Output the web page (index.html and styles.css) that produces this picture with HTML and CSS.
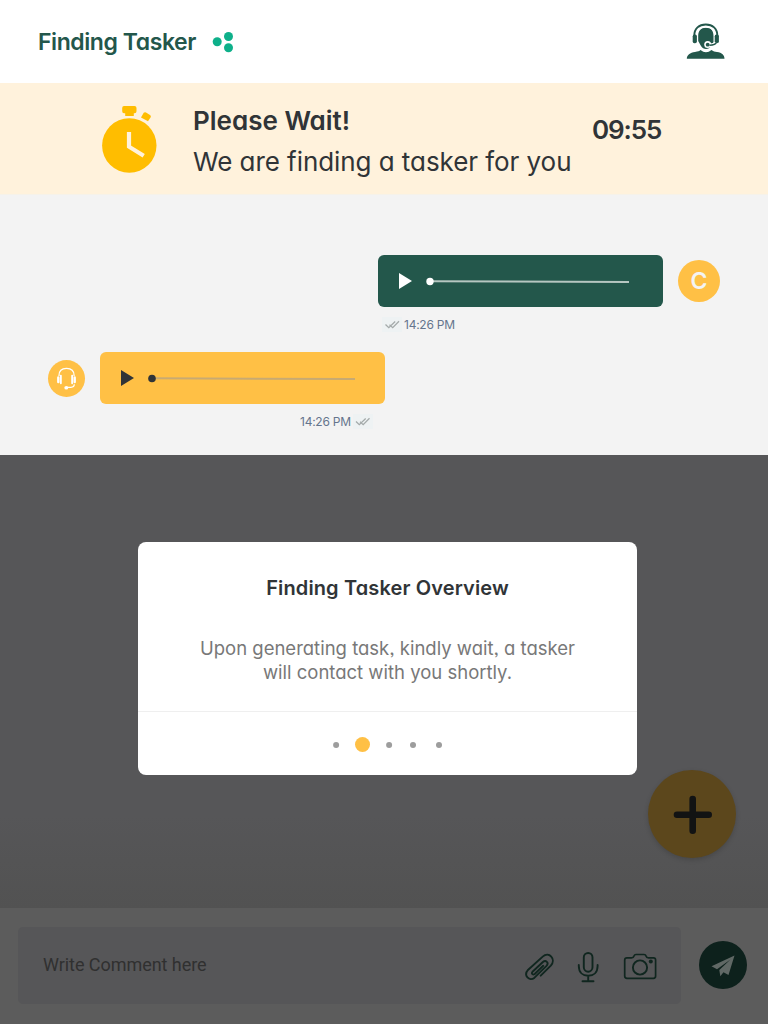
FILE: index.html
```html
<!DOCTYPE html>
<html lang="en">
<head>
<meta charset="utf-8">
<title>Finding Tasker</title>
<link rel="stylesheet" href="styles.css">
</head>
<body>
<div class="app">
  <header class="header">
    <h1 class="header-title">Finding Tasker</h1>
    <svg class="header-dots" width="22" height="22" viewBox="0 0 22 22" fill="#0eb08a"><circle cx="5.2" cy="10.800" r="4.500"/><circle cx="16.500" cy="5.500" r="4.500"/><circle cx="16.500" cy="16.800" r="4.500"/></svg>
    <svg class="header-agent" width="40" height="38" viewBox="0 0 40 38">
      <path d="M.8 35.800C.8 32 4 29.800 9 29C12 28.500 13.500 28 14.500 27Q20 31.500 25.500 27C27 28.300 29 28.800 31 29C36 29.800 38.500 32 38.500 35.800Z" fill="#23574b"/>
      <path d="M12.200 13C12.200 7 15.500 4.500 20 4.500S27.500 7 27.500 13V19L25 23C23 27 17 27 15 23L12.200 18Z" fill="#23574b"/>
      <path d="M8.300 14V12.500C8.300 5.500 13 1.500 19.800 1.500S31.300 5.500 31.300 12.500V14" fill="none" stroke="#23574b" stroke-width="1.900"/>
      <path d="M10.500 14C10.500 8 14 4.200 19.800 4.200S29 8 29 14" fill="none" stroke="#fff" stroke-width="1.200"/>
      <rect x="6.700" y="11.500" width="4.200" height="8.800" rx="1.800" fill="#23574b"/><rect x="28.700" y="11.500" width="4.200" height="8.800" rx="1.800" fill="#23574b"/>
      <path d="M30 19.500C29.500 21.500 27.500 22.300 24 22.300" fill="none" stroke="#fff" stroke-width="3.600"/>
      <circle cx="21.700" cy="21.500" r="3.500" fill="#fff"/>
      <path d="M30.500 19C29.800 21.700 27.500 22.300 23.500 22.300" fill="none" stroke="#23574b" stroke-width="1.400"/>
      <circle cx="21.700" cy="21.700" r="1.900" fill="#23574b"/>
    </svg>
  </header>

  <section class="banner">
    <svg class="stopwatch" width="56" height="68" viewBox="0 0 56 68" fill="#ffbd00">
      <circle cx="27.300" cy="40.500" r="27.200"/>
      <path d="M22 1H32.500Q34.500 1 34.500 3V6.300Q34.500 8.300 32.500 8.300H31.800V11H23.200V8.300H22Q20.200 8.300 20.200 6.300V3Q20.200 1 22 1Z"/>
      <path d="M41.700 7.800Q42.700 6.700 44 7.400L48 10Q49.300 10.900 48.700 12.200L46 16.200L39 12.500Z"/>
      <path d="M27 27V41.700L41.700 50.800" fill="none" stroke="#fff2dc" stroke-width="4.200"/>
    </svg>
    <div class="banner-text">
      <p class="banner-heading">Please Wait!</p>
      <p class="banner-sub">We are finding a tasker for you</p>
    </div>
    <p class="timer">09:55</p>
  </section>

  <main class="chat">
    <div class="message message-out">
      <div class="bubble bubble-green">
        <svg width="285" height="52" viewBox="0 0 285 52"><path d="M21 18L34 26L21 34Z" fill="#fff"/><path d="M52 26.300L251 27.100" stroke="#b6c6c1" stroke-width="2"/><circle cx="52" cy="26.500" r="3.700" fill="#fff"/></svg>
      </div>
      <div class="avatar avatar-letter">C</div>
    </div>
    <div class="stamp stamp-out">
      <svg class="ticks" width="20" height="15" viewBox="0 0 20 15" fill="none" stroke="#a4aaaa" stroke-width="1.300"><path d="M3.500 7.500L6.800 10.700L13.200 4.500M7.500 7.800L10.700 10.700L17 4.300"/></svg>
      <span>14:26 PM</span>
    </div>
    <div class="message message-in">
      <div class="avatar avatar-agent">
        <svg width="37" height="37" viewBox="0 0 38 38" fill="none" stroke="#fff"><path d="M11.300 16.500V16C11.300 11 14.500 8.600 19 8.600S26.800 11 26.800 16V16.500M27 25C27 27.500 25.500 28 23.500 28H19" stroke-width="1.300"/><path d="M13.200 16V24M24.800 16V24" stroke-width="1.900" stroke-linecap="round"/><path d="M10.600 18V22.500M27.400 18V22.500" stroke-width="2.500" stroke-linecap="round"/><ellipse cx="18.800" cy="28.500" rx="2" ry="1.900" fill="#fff" stroke="none"/></svg>
      </div>
      <div class="bubble bubble-yellow">
        <svg width="285" height="52" viewBox="0 0 285 52"><path d="M21 18L34 26L21 34Z" fill="#303437"/><path d="M52 26.300L255 27.100" stroke="#c8aa72" stroke-width="2"/><circle cx="52" cy="26.500" r="3.800" fill="#303437"/></svg>
      </div>
    </div>
    <div class="stamp stamp-in">
      <span>14:26 PM</span>
      <svg class="ticks" width="20" height="15" viewBox="0 0 20 15" fill="none" stroke="#a4aaaa" stroke-width="1.300"><path d="M3 7.500L6.300 10.700L12.700 4.500M7 7.800L10.200 10.700L16.500 4.300"/></svg>
    </div>
  </main>

  <section class="dimmed">
    <div class="dialog">
      <div class="dialog-body">
        <h2 class="dialog-title">Finding Tasker Overview</h2>
        <p class="dialog-copy">Upon generating task, kindly wait, a tasker<br>will contact with you shortly.</p>
      </div>
      <div class="dialog-pager">
        <svg width="112" height="16" viewBox="0 0 112 16" fill="#9d9d9d"><circle cx="4.100" cy="8" r="3"/><circle cx="30.500" cy="7.500" r="7.500" fill="#ffc045"/><circle cx="57.100" cy="8" r="3"/><circle cx="81" cy="8" r="3"/><circle cx="107" cy="8" r="3"/></svg>
      </div>
    </div>
    <button class="fab" aria-label="Add">
      <svg width="40" height="40" viewBox="0 0 40 40"><path d="M20.700 5V36.700M5 20.800H36.700" stroke="#121313" stroke-width="6.600" stroke-linecap="round"/></svg>
    </button>
  </section>

  <footer class="composer">
    <div class="field">
      <span class="placeholder">Write Comment here</span>
      <svg width="134" height="36" viewBox="0 0 134 36" fill="none" stroke="#10261f" stroke-width="1.900" stroke-linecap="round" stroke-linejoin="round">
        <path d="M16.700 27.700L26.800 17.600C32.500 11 25 3.200 18.700 8.600L4.200 21.700C-1 27.500 5.300 34 10.500 29.700L22.500 17.800C25.300 14.700 21.800 11.700 18.900 14L8.500 23.800C7 25.800 9 27.300 10.700 26L19.200 17.800"/>
        <rect x="59.800" y="5" width="8.700" height="18.700" rx="4.350"/>
        <path d="M54.800 17V18C54.800 24.500 59 27.800 64.200 27.800S73.600 24.500 73.600 18V17M64.200 28V33M58.500 33.300H69.500"/>
        <path d="M103 9.800H107.500Q109.500 9.800 110 8Q110.500 6.500 112 6.500H120Q121.600 6.500 122 8Q122.500 9.800 124.500 9.800H129.500Q131.600 9.800 131.600 12V28Q131.600 30.300 129.500 30.300H103Q100.700 30.300 100.700 28V12Q100.700 9.800 103 9.800Z" stroke-width="1.700"/>
        <circle cx="116" cy="19.500" r="7.100"/><circle cx="126.800" cy="13.600" r="2" fill="#10261f" stroke="none"/>
      </svg>
    </div>
    <button class="send" aria-label="Send">
      <svg width="48" height="48" viewBox="0 0 48 48" fill="#606865"><path d="M35.500 14.500L12.500 25.200L18 28.200L31.500 18.500L20.300 29L21.300 35.200L24.500 31.300L29.500 34Z"/></svg>
    </button>
  </footer>
</div>
</body>
</html>
```
FILE: styles.css
```css
* { box-sizing: border-box; }
body { margin: 0; }
h1, h2, p { margin: 0; font-weight: inherit; }
button { border: 0; padding: 0; }
svg { display: block; flex: none; }

.app {
  width: 768px;
  height: 1024px;
  overflow: hidden;
  display: flex;
  flex-direction: column;
  font-family: Inter, "Open Sans", sans-serif;
  font-feature-settings: "cv11", "ss03";
  white-space: nowrap;
}

.header {
  height: 83px;
  flex: none;
  display: flex;
  align-items: center;
  padding: 0 42px 0 38px;
  background: #fff;
}
.header-title { width: 174px; font-size: 23px; font-weight: 600; letter-spacing: -.43px; color: #23574b; }
.header-agent { margin-left: auto; }

.banner {
  height: 112px;
  flex: none;
  display: flex;
  align-items: flex-start;
  padding: 22px 0 0 102px;
  background: #fff2dc;
  border-bottom: 1px solid #f6f2e9;
  color: #303437;
  font-size: 26px;
}
.banner-text { width: 399px; margin-left: 35px; padding-top: 1px; line-height: 30px; }
.banner-heading { font-weight: 600; }
.banner-sub { margin-top: 11px; letter-spacing: -.06px; }
.timer { padding-top: 9px; line-height: 32px; font-weight: 600; letter-spacing: -1.1px; }

.chat { height: 260px; flex: none; padding-top: 60px; background: #f3f3f3; }
.message { display: flex; align-items: center; gap: 15px; }
.message-out { margin-left: 378px; }
.message-in { margin: 20px 0 0 48px; }
.bubble { width: 285px; height: 52px; border-radius: 6px; }
.bubble-green { background: #23574b; }
.bubble-yellow { background: #ffc045; }
.avatar { display: flex; align-items: center; justify-content: center; border-radius: 50%; background: #ffc045; }
.avatar-letter { width: 42px; height: 42px; color: #f3f3f3; font-size: 23px; font-weight: 600; }
.avatar-agent { width: 37px; height: 37px; }
.stamp { display: flex; align-items: center; height: 15px; color: #65758d; font-size: 12px; letter-spacing: -.24px; }
.stamp-out { margin: 10px 0 0 382px; gap: 2px; }
.stamp-in { margin: 10px 0 0 300px; gap: 2px; }
.ticks { background: #eef2f3; }

.dimmed {
  position: relative;
  height: 453px;
  flex: none;
  padding: 87px 0 0 138px;
  background: linear-gradient(#565658 360px, #525252);
}
.dialog { width: 499px; height: 233px; border-radius: 8px; background: #fff; text-align: center; }
.dialog-body { height: 170px; padding-top: 33px; border-bottom: 1px solid #efefef; }
.dialog-title { font-size: 20px; line-height: 26px; font-weight: 600; letter-spacing: .13px; color: #303437; }
.dialog-copy { margin-top: 35px; font-size: 18.5px; line-height: 24px; color: #787878; }
.dialog-pager { display: flex; justify-content: center; padding: 25px 0 0 1px; }
.fab {
  position: absolute;
  top: 315px;
  right: 32px;
  width: 88px;
  height: 88px;
  display: flex;
  align-items: center;
  justify-content: center;
  border-radius: 50%;
  background: #5c471c;
  box-shadow: 0 2px 5px rgba(0, 0, 0, .16);
}

.composer {
  flex: 1;
  display: flex;
  align-items: flex-start;
  padding: 19px 20px 0 18px;
  background: #5c5c5c;
}
.field {
  width: 663px;
  height: 77px;
  display: flex;
  align-items: center;
  justify-content: space-between;
  padding: 0 23px 0 25px;
  border-radius: 5px;
  background: #565658;
}
.placeholder { padding-bottom: 2px; font-family: Roboto, sans-serif; font-size: 18px; letter-spacing: -.05px; color: #303030; }
.send { margin: 14px 0 0 18px; width: 48px; height: 48px; border-radius: 50%; background: #0d211c; }
```
